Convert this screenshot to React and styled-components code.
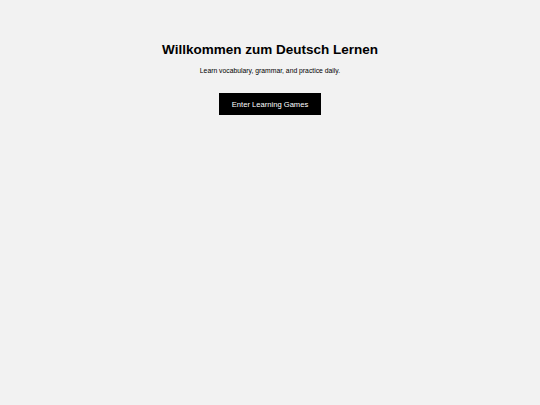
import React from "react";
import styled, { createGlobalStyle } from "styled-components";

const GlobalStyle = createGlobalStyle`
    html, body {
        margin: 0;
        padding: 0;
        background: #f2f2f2;
    }
    body {
        font-family: "Liberation Sans", Arial, sans-serif;
        color: #000;
    }
`

const Container = styled.div`
    width: 540px;
    height: 405px;
    background: #f2f2f2;
`
const Wrapper = styled.div`
    display: flex;
    flex-direction: column;
    align-items: center;
    padding-top: 41px;
`
const Title = styled.h1`
    margin: 0;
    font-size: 13.5px;
    font-weight: 700;
    line-height: 17px;
`
const Subtitle = styled.p`
    margin: 8px 0 0;
    font-size: 6.8px;
    line-height: 9px;
`
const Button = styled.button`
    margin-top: 18px;
    width: 102px;
    height: 22px;
    border: none;
    background: #000;
    color: #fff;
    font-family: "Liberation Sans", Arial, sans-serif;
    font-size: 7.6px;
    padding: 0;
    cursor: pointer;
`

export default function App(){
    return(
        <Container>
            <GlobalStyle/>
            <Wrapper>
                <Title>Willkommen zum Deutsch Lernen</Title>
                <Subtitle>Learn vocabulary, grammar, and practice daily.</Subtitle>
                <Button>Enter Learning Games</Button>
            </Wrapper>
        </Container>
    )
}
